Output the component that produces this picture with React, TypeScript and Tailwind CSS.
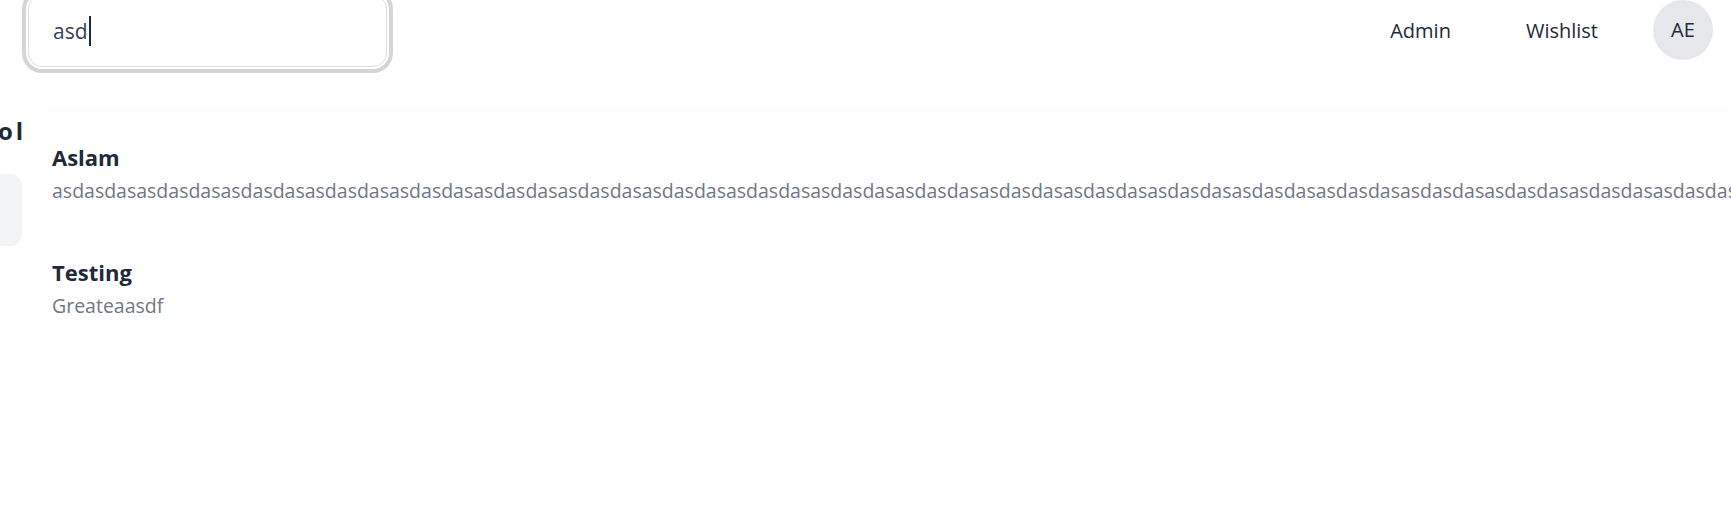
import { useState } from "react";

const results = [
  { title: "Aslam", body: "asdasdas".repeat(26) },
  { title: "Testing", body: "Greateaasdf" },
];

function SearchBox() {
  const [query] = useState("asd");

  return (
    <div className="relative ml-[28px]">
      <div className="flex h-[72px] w-[359px] items-center rounded-[14px] border border-[#dcdde0] bg-white px-6 ring-4 ring-[#d4d5d9] ring-offset-2">
        <span className="text-[21px] leading-[30px] text-gray-700">{query}</span>
        <span className="ml-[1px] inline-block h-[30px] w-[2px] bg-gray-800" />
      </div>

      <div className="absolute left-0 top-[117px] z-10 h-[230px] w-[1760px] rounded-[22px] bg-white shadow-[0_-1px_2px_rgba(0,0,0,0.02)]">
        {results.map((r) => (
          <div key={r.title} className="h-[115px] px-6 pt-[30px]">
            <p className="text-[22px] font-bold leading-[31px] text-gray-800">{r.title}</p>
            <p className="mt-[2px] whitespace-nowrap text-[19.5px] leading-[31px] text-[#717784]">{r.body}</p>
          </div>
        ))}
      </div>
    </div>
  );
}

export default function App() {
  return (
    <div className="relative h-[526px] w-full overflow-hidden bg-white font-['Open_Sans',sans-serif]">
      <header className="-mt-[5px] flex h-[72px] items-center justify-between pr-[18px]">
        <SearchBox />
        <nav className="flex items-center text-[20px] text-gray-800">
          <a href="#" className="mr-[75px]">Admin</a>
          <a href="#" className="mr-[55px]">Wishlist</a>
          <div className="-mt-[2px] flex h-[60px] w-[60px] items-center justify-center rounded-full bg-gray-200">
            AE
          </div>
        </nav>
      </header>

      <main className="flex flex-col">
        <h2 className="-ml-[2px] mt-[48px] text-[24px] font-bold leading-[32px] tracking-[3px] text-gray-800">ol</h2>
        <div className="-ml-[100px] mt-[27px] h-[72px] w-[122px] rounded-xl bg-gray-100" />
      </main>
    </div>
  );
}
